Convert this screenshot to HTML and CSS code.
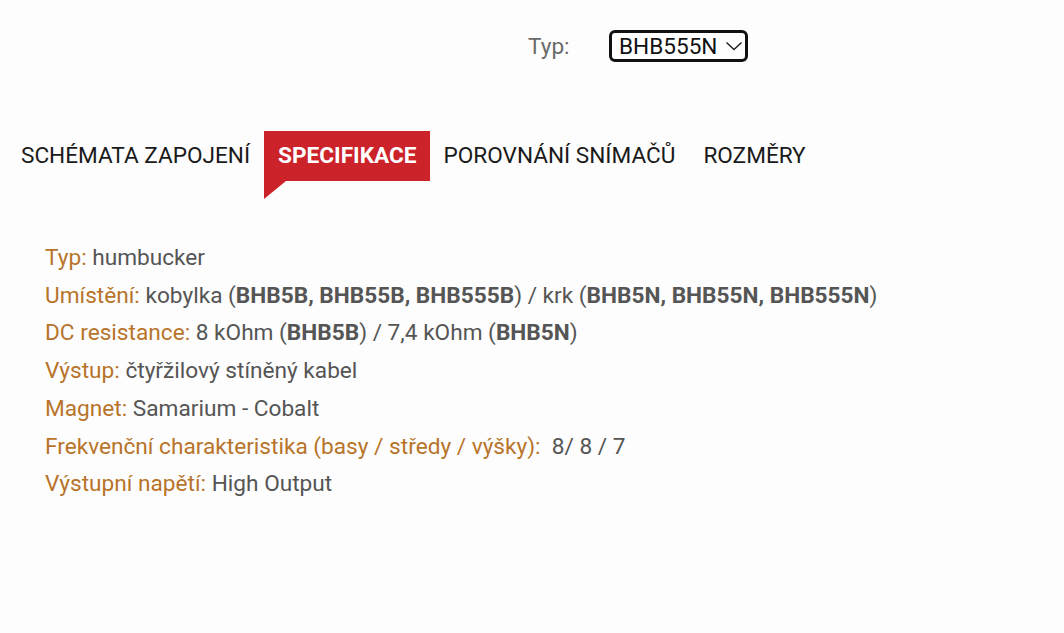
FILE: index.html
```html
<!DOCTYPE html>
<html lang="cs">
<head>
<meta charset="utf-8">
<title>Specifikace</title>
<link rel="stylesheet" href="styles.css">
</head>
<body>
<div class="page">
  <div class="type-row">
    <span class="type-label">Typ:</span>
    <div class="select">
      <span class="select-value">BHB555N</span>
      <svg class="chev" width="18" height="10" viewBox="0 0 18 10"><path d="M1.5 1.5 L9 8.5 L16.5 1.5" fill="none" stroke="#222" stroke-width="1.5"/></svg>
    </div>
  </div>
  <nav class="tabs">
    <span class="tab">SCHÉMATA ZAPOJENÍ</span>
    <span class="tab active">SPECIFIKACE</span>
    <span class="tab">POROVNÁNÍ SNÍMAČŮ</span>
    <span class="tab">ROZMĚRY</span>
  </nav>
  <ul class="specs">
    <li><span class="lbl">Typ:</span> humbucker</li>
    <li><span class="lbl">Umístění:</span> kobylka (<b>BHB5B, BHB55B, BHB555B</b>) / krk (<b>BHB5N, BHB55N, BHB555N</b>)</li>
    <li><span class="lbl">DC resistance:</span> 8 kOhm (<b>BHB5B</b>) / 7,4 kOhm (<b>BHB5N</b>)</li>
    <li><span class="lbl">Výstup:</span> čtyřžilový stíněný kabel</li>
    <li><span class="lbl">Magnet:</span> Samarium - Cobalt</li>
    <li><span class="lbl">Frekvenční charakteristika (basy / středy / výšky):</span>&nbsp; 8/ 8 / 7</li>
    <li><span class="lbl">Výstupní napětí:</span> High Output</li>
  </ul>
</div>
</body>
</html>
```
FILE: styles.css
```css
html, body {
  margin: 0;
  padding: 0;
  background: #fdfdfd;
}
body {
  font-family: Roboto, "Liberation Sans", sans-serif;
  width: 1064px;
  height: 633px;
  overflow: hidden;
}
.page {
  display: flex;
  flex-direction: column;
}
.type-row {
  display: flex;
  align-items: center;
  padding: 30px 0 0 528px;
  height: 32px;
}
.type-label {
  font-size: 22.6px;
  color: #6a6a6a;
  width: 81px;
}
.select {
  box-sizing: border-box;
  width: 139px;
  height: 32px;
  border: 3px solid #111;
  border-radius: 6px;
  display: flex;
  align-items: center;
  padding-left: 7px;
  gap: 8px;
  background: #fff;
}
.select-value {
  font-size: 22.6px;
  color: #111;
}
.chev {
  display: block;
}
.tabs {
  display: flex;
  align-items: center;
  margin-top: 69px;
  padding-left: 7px;
  height: 50px;
}
.tab {
  font-size: 22.6px;
  color: #1a1a1a;
  padding: 0 14px;
  line-height: 50px;
  position: relative;
  white-space: nowrap;
}
.tab.active {
  background: #cc2229;
  color: #fff;
  font-weight: 700;
  padding: 0 13px 0 14px;
}
.tab.active::after {
  content: "";
  position: absolute;
  left: 0;
  top: 100%;
  width: 0;
  height: 0;
  border-top: 18px solid #cc2229;
  border-right: 22px solid transparent;
}
.specs {
  list-style: none;
  margin: 58px 0 0 0;
  padding: 0 0 0 45px;
  font-size: 22.65px;
  color: #555;
}
.specs li {
  line-height: 37.7px;
  white-space: nowrap;
}
.specs b {
  font-weight: 700;
  color: #555;
}
.lbl {
  color: #b8742a;
}
```
